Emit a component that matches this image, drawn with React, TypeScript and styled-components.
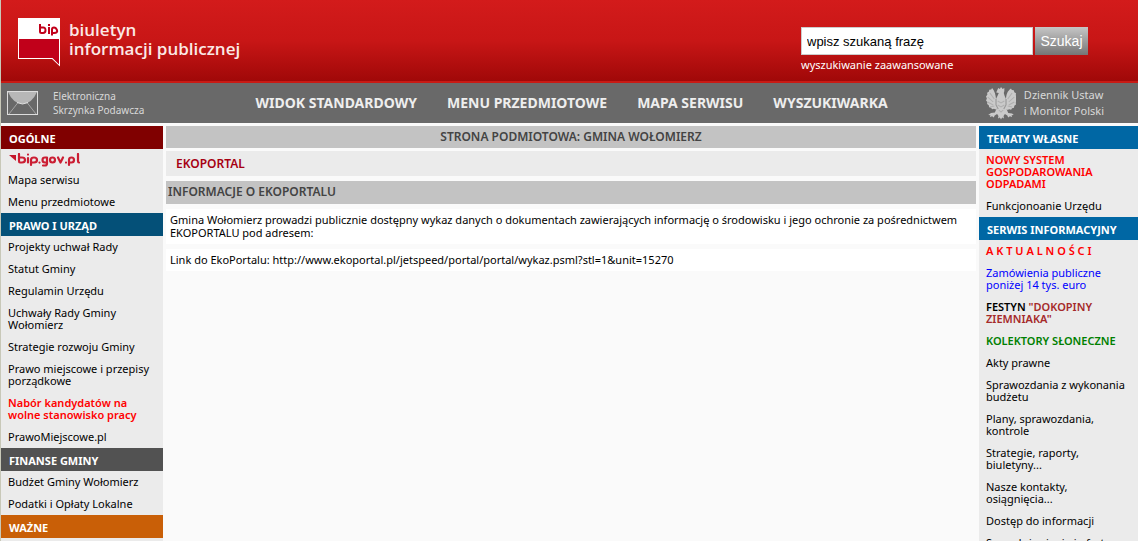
import React from "react";
import styled, { createGlobalStyle } from "styled-components";

const Global = createGlobalStyle`
  * { box-sizing: border-box; }
  body {
    margin: 0;
    background: #fafafa;
    color: #000;
    font: 11px/12px "Noto Sans", sans-serif;
  }
  a { color: inherit; text-decoration: none; }
  ul, p, h1, h2 { margin: 0; padding: 0; list-style: none; }
`;

const Page = styled.div`
  height: 100vh;
  overflow: hidden;
  border-left: 1px solid #c8c8b8;
`;

const Header = styled.header`
  display: flex;
  justify-content: space-between;
  height: 83px;
  padding: 18px 50px 0 17px;
  background: linear-gradient(#d31b1b, #c81616 50%, #a00808);
  border-bottom: 2px solid #c81a14;
`;

const Logo = styled.a`
  display: flex;
  gap: 9px;
  color: #fbe9e6;
  font: 600 17px/19px "Open Sans", sans-serif;
`;

const LogoText = styled.span`
  padding-top: 2px;
`;

const Search = styled.form`
  display: grid;
  grid-template-columns: 232px 53px;
  column-gap: 2px;
  align-content: start;
  padding-top: 9px;
`;

const SearchInput = styled.input`
  height: 28px;
  padding: 0 5px;
  border: 1px solid #ccc;
  background: #fff;
  font: 13px "Liberation Sans", sans-serif;
`;

const SearchButton = styled.button`
  height: 28px;
  padding: 0;
  border: 0;
  background: linear-gradient(#c6c6c6, #757575);
  color: #fff;
  font: 14px "Liberation Sans", sans-serif;
`;

const Advanced = styled.a`
  padding-top: 3px;
  color: #fff;
  line-height: 14px;
`;

const NavBar = styled.nav`
  display: flex;
  align-items: center;
  justify-content: space-between;
  height: 40px;
  padding: 0 34px 0 6px;
  background: #696969;
  color: #d8d8d8;
`;

const IconLink = styled.a<{ $gap: number; $size: number; $leading: number }>`
  display: flex;
  align-items: center;
  gap: ${(p) => p.$gap}px;
  font-size: ${(p) => p.$size}px;
  line-height: ${(p) => p.$leading}px;
`;

const Menu = styled.ul`
  display: flex;
  gap: 30px;
  padding-left: 13px;
  color: #eee;
  font: bold 14px/18px "Noto Sans", sans-serif;
`;

const Columns = styled.div`
  display: grid;
  grid-template-columns: 162px minmax(0, 1fr) 159px;
  gap: 3px;
  padding-top: 3px;
`;

const Side = styled.aside`
  background: #ebebeb;
`;

const SideTitle = styled.h2<{ $color: string }>`
  padding: 3px 8px 0;
  height: 23px;
  background: ${(p) => p.$color};
  color: #fff;
  font-size: 11px;
  line-height: 20px;
`;

const Item = styled.li<{ $color?: string; $bold?: boolean }>`
  padding: 5px 8px 5px 7px;
  color: ${(p) => p.$color || "#000"};
  font-weight: ${(p) => (p.$bold ? 600 : 400)};
`;

const LogoItem = styled.li`
  height: 20px;
  padding: 4px 8px 0;
`;

const Brown = styled.span`
  color: #a52a2a;
`;

const Main = styled.main`
  display: flex;
  flex-direction: column;
  gap: 5px;
`;

const Titles = styled.div`
  display: grid;
  gap: 3px;
`;

const Banner = styled.p`
  background: #c3c3c3;
  color: #444;
  font-size: 12px;
  font-weight: 600;
  line-height: 22px;
  text-align: center;
`;

const PageTitle = styled.h1`
  padding: 0 10px;
  background: #ebebeb;
  color: #a60012;
  font-size: 12px;
  font-weight: 600;
  line-height: 25px;
`;

const SectionTitle = styled.h2`
  padding: 0 2px 1px;
  background: #c3c3c3;
  color: #444;
  font-size: 12px;
  font-weight: 600;
  line-height: 22px;
`;

const Text = styled.p`
  padding: 4px 4px 5px;
  background: #fff;
  line-height: 13px;
`;

const BipMark = () => (
  <svg width="42" height="49" viewBox="0 0 42 49" aria-hidden="true">
    <path d="M0 0H42V48.500L34 41H0Z" fill="#fff" />
    <path d="M1 21H41V46.500L34.500 40H1Z" fill="#c1001a" />
    <g fill="none" stroke="#c1001a" strokeWidth="2">
      <path d="M22 6V13.500Q22 15 23.500 15H25Q27.500 15 27.500 12.200T25 9.500H22M31 9V16M34 17.500V11.500Q34 9.500 36 9.500T39 12.200T36 15H34" />
      <path d="M31 6V8" />
    </g>
  </svg>
);

const Envelope = () => (
  <svg width="31" height="24" viewBox="0 0 31 24" aria-hidden="true">
    <path d="M1 1H30Q25 12.500 15.500 13Q6 12.500 1 1Z" fill="#b7b7b7" />
    <path d="M2 23L11 11.500M29 23L20 11.500" stroke="#a5a5a5" fill="none" />
    <path d="M10 11.500Q15.500 14.500 21 11.500" stroke="#e0e0e0" fill="none" />
    <rect x=".5" y=".5" width="30" height="23" stroke="#ddd" fill="none" />
  </svg>
);

const Eagle = () => (
  <svg width="30" height="33" viewBox="1.500 0 27 33" preserveAspectRatio="none" aria-hidden="true">
    <path
      fill="#cacaca"
      d="M12.500 1l1.500 1 1-2 1.500 2L18 1v3l-.5 2 .8 3 1.200 3c.3-4 1-8 4.500-10.500l.8 1.500 1.700.3.500 2 1.500 1-.2 2 1.200 1.700-.8 2 .8 2-1.200 1.500.2 2-1.500 1.200-.3 2-1.800.5-.8 1.500-1.800-.5-1.300.8-1-1 1.500 4 3.500.5 1.500 1.500-2 .2.500 1.800-2-.8-1.500 1.300-.8-2-2.200-1.500-1.200 2 .4 2.500-1.700-1-1 2-1-2-1.700 1 .4-2.500-1.200-2-2.200 1.500-.8 2-1.500-1.300-2 .8.500-1.800-2-.2L6 26l3.500-.5 1.500-4-1 1-1.300-.8-1.800.5-.8-1.500-1.800-.5-.3-2-1.500-1.200.2-2-1.200-1.500.8-2-.8-2 1.200-1.700-.2-2 1.500-1 .5-2 1.700-.3.800-1.500C9.500 4 10.200 8 10.500 12l1.300-3 1.200-3-2.300-.5Z"
    />
    <path
      d="M5 6l4 6M3 10l5 5M3 15l5 3M5 20l4-1M25 6l-4 6M27 10l-5 5M27 15l-5 3M25 20l-4-1M12 14l3 2 3-2M12 18l3 2 3-2M13 23l2 2 2-2"
      stroke="#b0b0b0"
      fill="none"
    />
    <path d="M10.500 12v6l2 4M19.500 12v6l-2 4" stroke="#989898" fill="none" />
  </svg>
);

const BipGov = () => (
  <svg width="71" height="15" viewBox="0 0 71 15" role="img" aria-label="bip.gov.pl">
    <path d="M0 2H7V8Z" fill="#c5162b" />
    <g fill="none" stroke="#cb1e33" strokeWidth="2.200" strokeLinecap="round" strokeLinejoin="round">
      <path d="M10 1V8Q10 9.500 11 9.500H13Q16 9.500 16 7T13 4.500H10M19 5V9.500M22 12V7Q22 4.500 25 4.500T28 7T25 9.500H22" />
      <path d="M37.500 9.500H36Q33.500 9.500 33.500 7T36 4.500H38V10.500Q38 12.500 36 12.500H34M43.500 4.500Q46 4.500 46 7T43.500 9.500T41 7T43.500 4.500M49 4.500L51.500 9.500L54 4.500M60 12V7Q60 4.500 62.500 4.500T65 7T62.500 9.500H60M69 1V8Q69 9.500 70 9.500" />
      <path d="M19 1.500V1.600M30.500 9.500V9.600M57 9.500V9.600" />
    </g>
  </svg>
);

type Entry = { text: React.ReactNode; color?: string; bold?: boolean };

const lawItems: Entry[] = [
  { text: "Projekty uchwał Rady" },
  { text: "Statut Gminy" },
  { text: "Regulamin Urzędu" },
  { text: "Uchwały Rady Gminy Wołomierz" },
  { text: "Strategie rozwoju Gminy" },
  { text: "Prawo miejscowe i przepisy porządkowe" },
  { text: "Nabór kandydatów na wolne stanowisko pracy", color: "#f00", bold: true },
  { text: "PrawoMiejscowe.pl" },
];

const serviceItems: Entry[] = [
  { text: "A K T U A L N O Ś C I", color: "#f00", bold: true },
  { text: "Zamówienia publiczne poniżej 14 tys. euro", color: "#00f" },
  { text: <>FESTYN <Brown>"DOKOPINY ZIEMNIAKA"</Brown></>, bold: true },
  { text: "KOLEKTORY SŁONECZNE", color: "#008000", bold: true },
  { text: "Akty prawne" },
  { text: "Sprawozdania z wykonania budżetu" },
  { text: "Plany, sprawozdania, kontrole" },
  { text: "Strategie, raporty, biuletyny..." },
  { text: "Nasze kontakty, osiągnięcia..." },
  { text: "Dostęp do informacji" },
  { text: "Sprzedaż mienia i oferty" },
];

const Items = ({ entries }: { entries: Entry[] }) => (
  <ul>
    {entries.map((e, i) => (
      <Item key={i} $color={e.color} $bold={e.bold}>
        <a href="#">{e.text}</a>
      </Item>
    ))}
  </ul>
);

export default function App() {
  return (
    <Page>
      <Global />
      <Header>
        <Logo href="#">
          <BipMark />
          <LogoText>biuletyn<br />informacji publicznej</LogoText>
        </Logo>
        <Search>
          <SearchInput aria-label="Szukana fraza" defaultValue="wpisz szukaną frazę" />
          <SearchButton type="button">Szukaj</SearchButton>
          <Advanced href="#">wyszukiwanie zaawansowane</Advanced>
        </Search>
      </Header>
      <NavBar>
        <IconLink href="#" $gap={15} $size={10} $leading={14}>
          <Envelope />
          <span>Elektroniczna<br />Skrzynka Podawcza</span>
        </IconLink>
        <Menu>
          {["WIDOK STANDARDOWY", "MENU PRZEDMIOTOWE", "MAPA SERWISU", "WYSZUKIWARKA"].map((m) => (
            <li key={m}><a href="#">{m}</a></li>
          ))}
        </Menu>
        <IconLink href="#" $gap={8} $size={11} $leading={16}>
          <Eagle />
          <span>Dziennik Ustaw<br />i Monitor Polski</span>
        </IconLink>
      </NavBar>
      <Columns>
        <Side>
          <SideTitle $color="#800000">OGÓLNE</SideTitle>
          <ul>
            <LogoItem><a href="#"><BipGov /></a></LogoItem>
            <Item><a href="#">Mapa serwisu</a></Item>
            <Item><a href="#">Menu przedmiotowe</a></Item>
          </ul>
          <SideTitle $color="#045078">PRAWO I URZĄD</SideTitle>
          <Items entries={lawItems} />
          <SideTitle $color="#525252">FINANSE GMINY</SideTitle>
          <Items entries={[{ text: "Budżet Gminy Wołomierz" }, { text: "Podatki i Opłaty Lokalne" }]} />
          <SideTitle $color="#c95f07">WAŻNE</SideTitle>
        </Side>
        <Main>
          <Titles>
            <Banner>STRONA PODMIOTOWA: GMINA WOŁOMIERZ</Banner>
            <PageTitle>EKOPORTAL</PageTitle>
          </Titles>
          <SectionTitle>INFORMACJE O EKOPORTALU</SectionTitle>
          <Text>
            Gmina Wołomierz prowadzi publicznie dostępny wykaz danych o dokumentach zawierających
            informację o środowisku i jego ochronie za pośrednictwem EKOPORTALU pod adresem:
          </Text>
          <Text>
            Link do EkoPortalu: <a href="#">http://www.ekoportal.pl/jetspeed/portal/portal/wykaz.psml?stl=1&amp;unit=15270</a>
          </Text>
        </Main>
        <Side>
          <SideTitle $color="#0067a4">TEMATY WŁASNE</SideTitle>
          <Items
            entries={[
              { text: "NOWY SYSTEM GOSPODAROWANIA ODPADAMI", color: "#f00", bold: true },
              { text: "Funkcjonoanie Urzędu" },
            ]}
          />
          <SideTitle $color="#0067a4">SERWIS INFORMACYJNY</SideTitle>
          <Items entries={serviceItems} />
        </Side>
      </Columns>
    </Page>
  );
}
